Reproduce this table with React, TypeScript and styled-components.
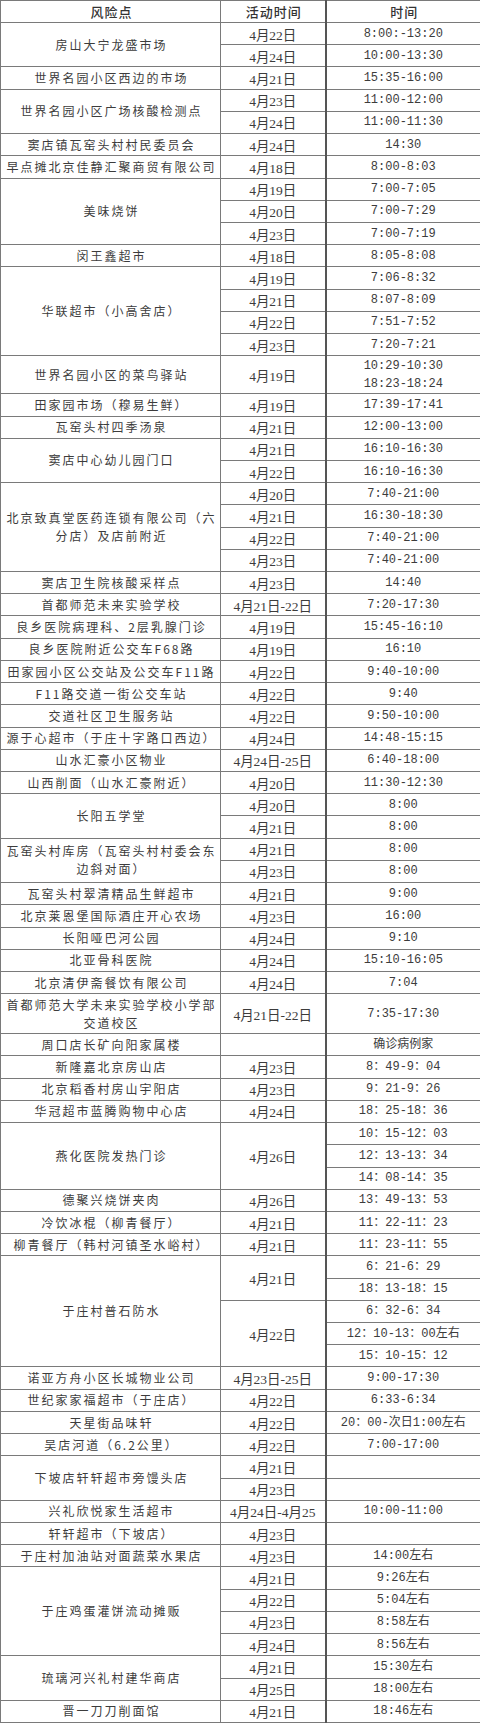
import React from 'react'
import styled, { createGlobalStyle } from 'styled-components'

const GlobalStyle = createGlobalStyle`
  html, body {
    margin: 0;
    padding: 0;
    background: #fff;
  }
  body {
    font-family: "Noto Sans CJK SC", sans-serif;
    color: #3a3a3a;
  }
`

interface DateEntry {
  date: string
  times: string[]
}

interface RiskPoint {
  place: string[]
  dates: DateEntry[]
  height?: number
}

const d = (date: string, ...times: string[]): DateEntry => ({
  date,
  times: times.length ? times : [''],
})

const POINTS: RiskPoint[] = [
  { place: ['房山大宁龙盛市场'], dates: [d('4月22日', '8:00:-13:20'), d('4月24日', '10:00-13:30')] },
  { place: ['世界名园小区西边的市场'], dates: [d('4月21日', '15:35-16:00')] },
  { place: ['世界名园小区广场核酸检测点'], dates: [d('4月23日', '11:00-12:00'), d('4月24日', '11:00-11:30')] },
  { place: ['窦店镇瓦窑头村村民委员会'], dates: [d('4月24日', '14:30')] },
  { place: ['早点摊北京佳静汇聚商贸有限公司'], dates: [d('4月18日', '8:00-8:03')] },
  {
    place: ['美味烧饼'],
    dates: [d('4月19日', '7:00-7:05'), d('4月20日', '7:00-7:29'), d('4月23日', '7:00-7:19')],
  },
  { place: ['闵王鑫超市'], dates: [d('4月18日', '8:05-8:08')] },
  {
    place: ['华联超市（小高舍店）'],
    dates: [
      d('4月19日', '7:06-8:32'),
      d('4月21日', '8:07-8:09'),
      d('4月22日', '7:51-7:52'),
      d('4月23日', '7:20-7:21'),
    ],
  },
  { place: ['世界名园小区的菜鸟驿站'], height: 38, dates: [d('4月19日', '10:29-10:30\n18:23-18:24')] },
  { place: ['田家园市场（穆易生鲜）'], dates: [d('4月19日', '17:39-17:41')] },
  { place: ['瓦窑头村四季汤泉'], dates: [d('4月21日', '12:00-13:00')] },
  { place: ['窦店中心幼儿园门口'], dates: [d('4月21日', '16:10-16:30'), d('4月22日', '16:10-16:30')] },
  {
    place: ['北京致真堂医药连锁有限公司（六', '分店）及店前附近'],
    dates: [
      d('4月20日', '7:40-21:00'),
      d('4月21日', '16:30-18:30'),
      d('4月22日', '7:40-21:00'),
      d('4月23日', '7:40-21:00'),
    ],
  },
  { place: ['窦店卫生院核酸采样点'], dates: [d('4月23日', '14:40')] },
  { place: ['首都师范未来实验学校'], dates: [d('4月21日-22日', '7:20-17:30')] },
  { place: ['良乡医院病理科、2层乳腺门诊'], dates: [d('4月19日', '15:45-16:10')] },
  { place: ['良乡医院附近公交车F68路'], dates: [d('4月19日', '16:10')] },
  { place: ['田家园小区公交站及公交车F11路'], dates: [d('4月22日', '9:40-10:00')] },
  { place: ['F11路交道一街公交车站'], dates: [d('4月22日', '9:40')] },
  { place: ['交道社区卫生服务站'], dates: [d('4月22日', '9:50-10:00')] },
  { place: ['源于心超市（于庄十字路口西边）'], dates: [d('4月24日', '14:48-15:15')] },
  { place: ['山水汇豪小区物业'], dates: [d('4月24日-25日', '6:40-18:00')] },
  { place: ['山西削面（山水汇豪附近）'], dates: [d('4月20日', '11:30-12:30')] },
  { place: ['长阳五学堂'], dates: [d('4月20日', '8:00'), d('4月21日', '8:00')] },
  { place: ['瓦窑头村库房（瓦窑头村村委会东', '边斜对面）'], dates: [d('4月21日', '8:00'), d('4月23日', '8:00')] },
  { place: ['瓦窑头村翠清精品生鲜超市'], dates: [d('4月21日', '9:00')] },
  { place: ['北京莱恩堡国际酒庄开心农场'], dates: [d('4月23日', '16:00')] },
  { place: ['长阳哑巴河公园'], dates: [d('4月24日', '9:10')] },
  { place: ['北亚骨科医院'], dates: [d('4月24日', '15:10-16:05')] },
  { place: ['北京清伊斋餐饮有限公司'], dates: [d('4月24日', '7:04')] },
  {
    place: ['首都师范大学未来实验学校小学部', '交道校区'],
    height: 40,
    dates: [d('4月21日-22日', '7:35-17:30')],
  },
  { place: ['周口店长矿向阳家属楼'], dates: [d('', '确诊病例家')] },
  { place: ['新隆嘉北京房山店'], dates: [d('4月23日', '8：49-9：04')] },
  { place: ['北京稻香村房山宇阳店'], dates: [d('4月23日', '9：21-9：26')] },
  { place: ['华冠超市蓝腾购物中心店'], dates: [d('4月24日', '18：25-18：36')] },
  {
    place: ['燕化医院发热门诊'],
    dates: [d('4月26日', '10：15-12：03', '12：13-13：34', '14：08-14：35')],
  },
  { place: ['德聚兴烧饼夹肉'], dates: [d('4月26日', '13：49-13：53')] },
  { place: ['冷饮冰棍（柳青餐厅）'], dates: [d('4月21日', '11：22-11：23')] },
  { place: ['柳青餐厅（韩村河镇圣水峪村）'], dates: [d('4月21日', '11：23-11：55')] },
  {
    place: ['于庄村普石防水'],
    dates: [
      d('4月21日', '6：21-6：29', '18：13-18：15'),
      d('4月22日', '6：32-6：34', '12：10-13：00左右', '15：10-15：12'),
    ],
  },
  { place: ['诺亚方舟小区长城物业公司'], dates: [d('4月23日-25日', '9:00-17:30')] },
  { place: ['世纪家家福超市（于庄店）'], dates: [d('4月22日', '6:33-6:34')] },
  { place: ['天星街品味轩'], dates: [d('4月22日', '20：00-次日1:00左右')] },
  { place: ['吴店河道（6.2公里）'], dates: [d('4月22日', '7:00-17:00')] },
  { place: ['下坡店轩轩超市旁馒头店'], dates: [d('4月21日'), d('4月23日')] },
  { place: ['兴礼欣悦家生活超市'], dates: [d('4月24日-4月25', '10:00-11:00')] },
  { place: ['轩轩超市（下坡店）'], dates: [d('4月23日')] },
  { place: ['于庄村加油站对面蔬菜水果店'], dates: [d('4月23日', '14:00左右')] },
  {
    place: ['于庄鸡蛋灌饼流动摊贩'],
    dates: [
      d('4月21日', '9:26左右'),
      d('4月22日', '5:04左右'),
      d('4月23日', '8:58左右'),
      d('4月24日', '8:56左右'),
    ],
  },
  { place: ['琉璃河兴礼村建华商店'], dates: [d('4月21日', '15:30左右'), d('4月25日', '18:00左右')] },
  { place: ['晋一刀刀削面馆'], dates: [d('4月21日', '18:46左右')] },
]

export default function App() {
  const rows: React.ReactNode[] = []

  POINTS.forEach((point, pi) => {
    const span = point.dates.reduce((n, e) => n + e.times.length, 0)
    let first = true
    point.dates.forEach((entry, di) => {
      entry.times.forEach((time, ti) => {
        rows.push(
          <S.Row key={`${pi}-${di}-${ti}`} $h={point.height}>
            {first && (
              <S.Place rowSpan={span}>
                {point.place.map((line, li) => (
                  <React.Fragment key={li}>
                    {li > 0 && <br />}
                    {line}
                  </React.Fragment>
                ))}
              </S.Place>
            )}
            {ti === 0 && <S.DateCell rowSpan={entry.times.length}>{entry.date}</S.DateCell>}
            <S.TimeCell>{time}</S.TimeCell>
          </S.Row>,
        )
        first = false
      })
    })
  })

  return (
    <>
      <GlobalStyle />
      <S.Table>
        <colgroup>
          <col style={{ width: 220 }} />
          <col style={{ width: 105 }} />
          <col style={{ width: 155 }} />
        </colgroup>
        <thead>
          <S.Row $h={22}>
            <S.Head>风险点</S.Head>
            <S.Head>活动时间</S.Head>
            <S.Head $divider>时间</S.Head>
          </S.Row>
        </thead>
        <tbody>{rows}</tbody>
      </S.Table>
    </>
  )
}

const S = {
  Table: styled.table`
    width: 480px;
    border-collapse: collapse;
    table-layout: fixed;
    border: 1px solid #6a6a6a;
  `,
  Row: styled.tr<{ $h?: number }>`
    height: ${(p) => p.$h ?? 22.22}px;
  `,
  Head: styled.th<{ $divider?: boolean }>`
    padding: 0 0 0 2px;
    border: 1px solid #7a7a7a;
    border-left: ${(p) => (p.$divider ? '2px solid #555' : '1px solid #7a7a7a')};
    font-family: "Noto Sans CJK SC", sans-serif;
    font-size: 13px;
    font-weight: 500;
    letter-spacing: 1px;
    color: #333;
    text-align: center;
    vertical-align: middle;
  `,
  Place: styled.td`
    padding: 0 0 0 2px;
    border: 1px solid #7a7a7a;
    font-family: "Noto Sans CJK SC", sans-serif;
    font-size: 12px;
    letter-spacing: 2px;
    line-height: 18px;
    white-space: nowrap;
    color: #3c3c3c;
    text-align: center;
    vertical-align: middle;
  `,
  DateCell: styled.td`
    padding: 0;
    border: 1px solid #7a7a7a;
    font-family: "Liberation Serif", "Noto Sans CJK SC", serif;
    font-size: 13.5px;
    white-space: nowrap;
    color: #3c3c3c;
    text-align: center;
    vertical-align: middle;
  `,
  TimeCell: styled.td`
    padding: 0;
    border: 1px solid #7a7a7a;
    border-left: 2px solid #555;
    font-family: "Liberation Mono", "Noto Sans CJK SC", monospace;
    font-size: 12px;
    line-height: 18px;
    white-space: pre-line;
    color: #3c3c3c;
    text-align: center;
    vertical-align: middle;
  `,
}
